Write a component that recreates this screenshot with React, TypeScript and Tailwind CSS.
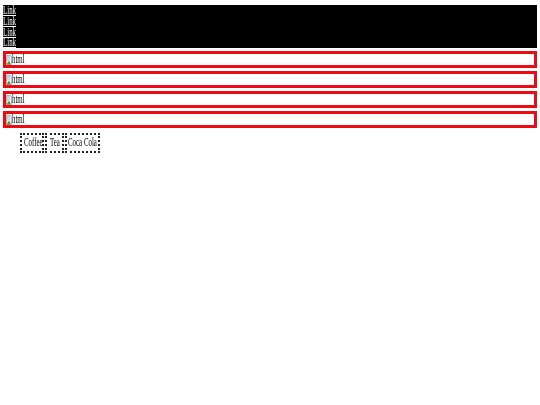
function Squeezed({ children, className = '', underline = false }: { children: string; className?: string; underline?: boolean }) {
  // the reference text is about 2/3 of the normal Times width
  return (
    <span className={`inline-block whitespace-nowrap ${className}`}>
      <span className={`inline-block origin-left scale-x-[0.6] ${underline ? 'underline' : ''}`}>{children}</span>
    </span>
  )
}

function BrokenImage() {
  return (
    <svg width="6" height="10" viewBox="0 0 6 10" className="shrink-0">
      <path d="M0.5 0.5H4.5L5.5 2V9.5H0.5Z" fill="#f4f4f4" stroke="#b4b4b4" />
      <path d="M0.5 9.5L3 5.5L5 9.5Z" fill="#4c9a3f" />
      <path d="M1 1H4V5L1 6Z" fill="#c4d6ee" />
    </svg>
  )
}

const LINKS = ['Link', 'Link', 'Link', 'Link']

export default function App() {
  return (
    <div className="bg-white w-[540px] h-[405px] overflow-hidden pt-[5px] px-[3px] text-[11.5px] leading-[10.5px] text-black blur-[0.3px]" style={{ fontFamily: '"Liberation Serif", serif' }}>
      <div className="bg-black h-[43px] flex flex-col">
        {LINKS.map((l, i) => (
          <a key={i} href="#" className="h-[10.75px] text-white w-[13px] block">
            <Squeezed className="w-[13px]" underline>{l}</Squeezed>
          </a>
        ))}
      </div>
      <div className="mt-[3px] flex flex-col gap-[3px]">
        {[0, 1, 2, 3].map((i) => (
          <div key={i} className="h-[17px] border-[3px] border-[#ee0a14] flex items-center bg-white">
            <BrokenImage />
            <Squeezed className="w-[13px] -mt-[1px]">html</Squeezed>
          </div>
        ))}
      </div>
      <ul className="mt-[5px] ml-[17px] flex gap-[1px] w-fit h-[20px]">
        <li className="w-[24px] border-2 border-dotted border-[#222] pl-[1.5px] flex items-center">
          <Squeezed className="w-[20px] -mt-[1px]">Coffee</Squeezed>
        </li>
        <li className="w-[19px] border-2 border-dotted border-[#222] pl-[3px] flex items-center">
          <Squeezed className="w-[10px] -mt-[1px]">Tea</Squeezed>
        </li>
        <li className="w-[35px] border-2 border-dotted border-[#222] pl-[1px] flex items-center">
          <Squeezed className="w-[29px] -mt-[1px]">Coca Cola</Squeezed>
        </li>
      </ul>
    </div>
  )
}
